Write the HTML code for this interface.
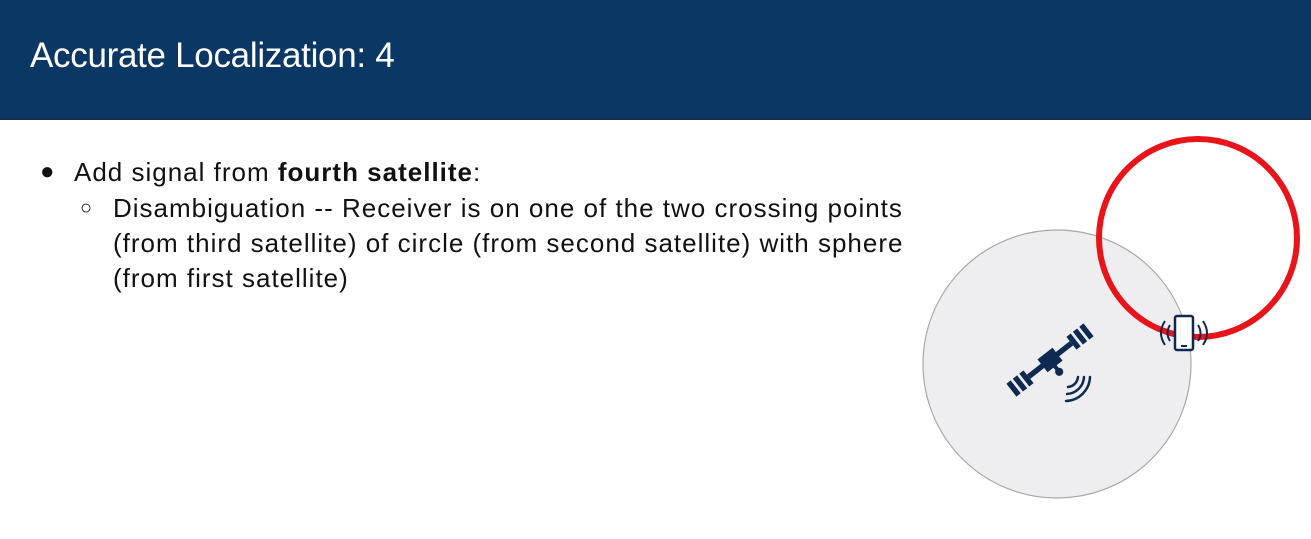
<!DOCTYPE html>
<html><head><style>
body{margin:0;width:1311px;height:539px;overflow:hidden;background:#fff;font-family:"Liberation Sans",Arial,sans-serif;position:relative}
.hd{position:absolute;left:0;top:0;width:1311px;height:118px;background:#0b3764;border-bottom:2px solid #1a2a50}
.hd h1{position:absolute;left:30px;top:36px;margin:0;font-weight:normal;color:#fff;font-size:35px;letter-spacing:-0.3px}
.t{position:absolute;font-size:26px;color:#111;white-space:nowrap;letter-spacing:1px}
</style></head><body>
<div class="hd"><h1>Accurate Localization: 4</h1></div>
<div class="t" style="left:40px;top:158px;font-size:24px">●</div>
<div class="t" style="left:74px;top:157px">Add signal from <b>fourth satellite</b>:</div>
<div class="t" style="left:80px;top:197px;font-size:20px">○</div>
<div class="t" style="left:113px;top:193px">Disambiguation -- Receiver is on one of the two crossing points</div>
<div class="t" style="left:113px;top:228px">(from third satellite) of circle (from second satellite) with sphere</div>
<div class="t" style="left:113px;top:263px">(from first satellite)</div>
<svg width="1311" height="539" style="position:absolute;left:0;top:0">
<circle cx="1057" cy="364" r="134" fill="#eeeef0" stroke="#a8a8a8" stroke-width="1.2"/>
<circle cx="1198" cy="238" r="99" fill="none" stroke="#e8141a" stroke-width="6"/>
<g fill="#0f2a52" transform="translate(1050,360) rotate(-38) scale(0.68)">
<rect x="-14" y="-12" width="28" height="24"/>
<rect x="-40" y="-4" width="28" height="8"/>
<rect x="12" y="-4" width="28" height="8"/>
<rect x="-48" y="-12" width="8" height="24"/><rect x="-60" y="-12" width="8" height="24"/><rect x="-72" y="-12" width="8" height="24"/>
<rect x="40" y="-12" width="8" height="24"/><rect x="52" y="-12" width="8" height="24"/><rect x="64" y="-12" width="8" height="24"/>
<rect x="-3" y="9" width="6" height="10"/><circle cx="0" cy="22" r="6"/>
</g>
<g fill="none" stroke="#0f2a52" stroke-width="2.5" stroke-linecap="round">
<path d="M1068 387 a11 11 0 0 0 10 -10"/>
<path d="M1067 394 a18 18 0 0 0 17 -17"/>
<path d="M1066 401 a25 25 0 0 0 24 -24"/>
</g>
<rect x="1175" y="316" width="18" height="34" rx="2" fill="#fff" stroke="#0f2a52" stroke-width="2.5"/>
<rect x="1181" y="345" width="6" height="2" fill="#0f2a52"/>
<g fill="none" stroke="#0f2a52" stroke-width="2">
<path d="M1170 325 q-5 8 0 16"/><path d="M1165 321 q-8 12 0 24"/>
<path d="M1198 325 q5 8 0 16"/><path d="M1203 321 q8 12 0 24"/>
</g>
</svg>
</body></html>
